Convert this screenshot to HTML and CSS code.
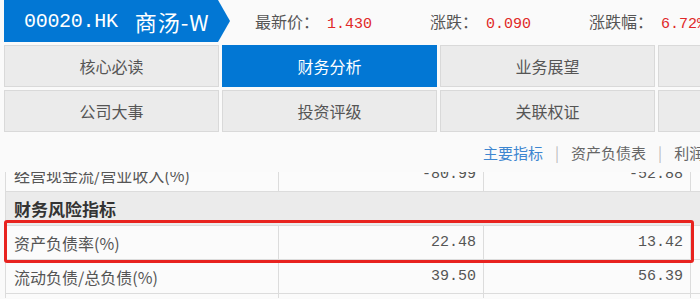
FILE: index.html
```html
<!DOCTYPE html>
<html lang="zh-CN">
<head>
  <meta charset="UTF-8">
  <meta name="viewport" content="width=device-width, initial-scale=1.0">
  <title>商汤-W 财务分析</title>
  <link rel="stylesheet" href="styles.css">
</head>
<body>
  <div class="page">
    <!-- stock header -->
    <div class="quote">
      <div class="stock-tag">
        <span class="code">00020.HK</span>
        <span class="name">商汤-W</span>
      </div>
      <div class="quote-item first">最新价：<span class="num">1.430</span></div>
      <div class="quote-item">涨跌：<span class="num">0.090</span></div>
      <div class="quote-item">涨跌幅：<span class="num">6.72%</span></div>
    </div>

    <!-- section tabs -->
    <div class="tabs">
      <div class="tab">核心必读</div>
      <div class="tab active">财务分析</div>
      <div class="tab">业务展望</div>
      <div class="tab"></div>
      <div class="tab">公司大事</div>
      <div class="tab">投资评级</div>
      <div class="tab">关联权证</div>
      <div class="tab"></div>
    </div>

    <div class="subnav">
      <span class="link current">主要指标</span>
      <span class="sep">|</span>
      <span class="link">资产负债表</span>
      <span class="sep">|</span>
      <span class="link">利润表</span>
    </div>

    <div class="table-view">
      <table class="fin-table">
        <tr>
          <td class="label">经营现金流/营业收入(%)</td>
          <td class="val">-80.99</td>
          <td class="val">-52.88</td>
          <td class="val"></td>
        </tr>
        <tr class="section">
          <td colspan="4">财务风险指标</td>
        </tr>
        <tr>
          <td class="label">资产负债率(%)</td>
          <td class="val">22.48</td>
          <td class="val">13.42</td>
          <td class="val"></td>
        </tr>
        <tr>
          <td class="label">流动负债/总负债(%)</td>
          <td class="val">39.50</td>
          <td class="val">56.39</td>
          <td class="val"></td>
        </tr>
        <tr>
          <td class="label">流动比率</td>
          <td class="val"></td>
          <td class="val"></td>
          <td class="val"></td>
        </tr>
      </table>
      <!-- highlight box drawn over the debt ratio row -->
      <div class="highlight"></div>
    </div>
  </div>
</body>
</html>
```

FILE: styles.css
```css
* {
  margin: 0;
  padding: 0;
  box-sizing: border-box;
}

body {
  background-color: #fafafa;
  font-family: "Noto Sans CJK SC", "Noto Sans", sans-serif;
  color: #555;
  overflow: hidden;
}

.page {
  width: 700px;
  height: 299px;
  overflow: hidden;
}

/* header with the stock code arrow */
.quote {
  display: flex;
  align-items: center;
  height: 42px;
  white-space: nowrap;
}

.stock-tag {
  display: flex;
  align-items: center;
  flex: none;
  width: 226px;
  height: 42px;
  margin-left: 4px;
  padding-left: 20px;
  background-color: #0277d4;
  color: #fff;
  clip-path: polygon(0 0, 214px 0, 226px 50%, 214px 100%, 0 100%);
}

.code {
  font-family: "Liberation Mono", monospace;
  font-size: 20px;
  letter-spacing: -0.3px;
}

.name {
  margin-left: 17px;
  font-size: 22px;
  letter-spacing: 1px;
}

.quote-item {
  flex: none;
  margin-left: 58px;
  font-size: 16px;
  color: #555;
}

.quote-item.first {
  margin-left: 25px;
}

.num {
  margin-left: 8px;
  font-family: "Liberation Mono", monospace;
  font-size: 15px;
  color: #e02828;
}

/* tab grid */
.tabs {
  display: grid;
  grid-template-columns: repeat(4, 215px);
  grid-auto-rows: 42px;
  gap: 3px;
  margin-top: 3px;
  padding-left: 4px;
}

.tab {
  display: flex;
  align-items: center;
  justify-content: center;
  background-color: #ebebeb;
  border: 1px solid #d9d9d9;
  font-size: 16px;
  color: #555;
}

.tab.active {
  background-color: #0277d4;
  border-color: #0277d4;
  color: #fff;
}

/* sub navigation */
.subnav {
  display: flex;
  align-items: center;
  height: 40px;
  padding-left: 483px;
  white-space: nowrap;
  font-size: 15px;
}

.link {
  flex: none;
  color: #666;
}

.link.current {
  color: #3d86d0;
}

.sep {
  flex: none;
  margin: 0 12px;
  color: #bbb;
}

/* data table, scrolled part-way */
.table-view {
  position: relative;
  height: 126px;
  overflow: hidden;
}

.fin-table {
  margin-top: -15px;
  margin-left: 5px;
  border-collapse: collapse;
  table-layout: fixed;
  width: 900px;
  font-size: 16px;
}

.fin-table td {
  height: 34px;
  border: 1px solid #dcdcdc;
  background-color: #fbfbfb;
  white-space: nowrap;
}

.fin-table td:nth-child(1) {
  width: 273px;
}

.fin-table td:nth-child(2) {
  width: 205px;
}

.fin-table td:nth-child(3) {
  width: 207px;
}

.label {
  padding-left: 8px;
  color: #555;
}

.val {
  padding-right: 7px;
  text-align: right;
  font-family: "Liberation Mono", monospace;
  font-size: 15px;
  color: #555;
}

.section td {
  height: 34px;
  padding-left: 8px;
  background-color: #ebebeb;
  font-size: 17px;
  font-weight: bold;
  color: #333;
}

.highlight {
  position: absolute;
  top: 48px;
  left: 4px;
  width: 690px;
  height: 43px;
  border: 3px solid #e8231f;
  border-radius: 3px;
  pointer-events: none;
}
```
